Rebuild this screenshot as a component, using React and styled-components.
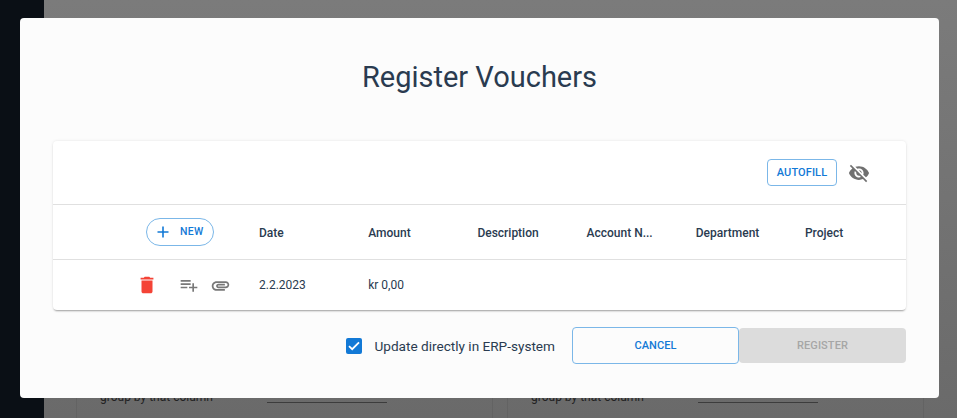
import styled, { createGlobalStyle } from "styled-components";

const GlobalStyle = createGlobalStyle`
  html, body {
    margin: 0;
    height: 100%;
    overflow: hidden;
  }
  body {
    font-family: Roboto, "Liberation Sans", sans-serif;
    color: #2a3b50;
  }
  #root {
    height: 100%;
  }
`;

const COLUMNS = ["Date", "Amount", "Description", "Account N...", "Department", "Project"];

const Page = styled.div`
  position: relative;
  display: flex;
  width: 957px;
  height: 418px;
  overflow: hidden;
`;

const Sidebar = styled.div`
  width: 44px;
  flex-shrink: 0;
  background: #0a0f15;
`;

const Backdrop = styled.div`
  flex: 1;
  display: flex;
  align-items: flex-end;
  gap: 14px;
  padding: 0 33px 0 32px;
  background: linear-gradient(#7b7b7b, #6a6a6a);
`;

const BackCard = styled.div`
  flex: 1;
  height: 60px;
  display: flex;
  align-items: flex-start;
  gap: 54px;
  padding: 30px 0 0 23px;
  box-sizing: border-box;
  border: 1px solid #636363;
  border-bottom: 0;
  font-size: 12px;
  line-height: 16px;
  white-space: nowrap;
  color: #222;
`;

const BackLine = styled.span`
  width: 120px;
  height: 13px;
  border-bottom: 1px solid #3c3c3c;
`;

const Modal = styled.div`
  position: absolute;
  left: 20px;
  top: 18px;
  width: 919px;
  height: 380px;
  box-sizing: border-box;
  padding: 0 33px;
  display: flex;
  flex-direction: column;
  background: #fcfcfc;
  border-radius: 4px;
`;

const Title = styled.h1`
  margin: 0;
  height: 123px;
  padding-top: 40px;
  box-sizing: border-box;
  text-align: center;
  font-size: 29px;
  line-height: 38px;
  font-weight: 400;
  color: #2a3b50;
`;

const Card = styled.div`
  height: 169px;
  display: flex;
  flex-direction: column;
  background: #fff;
  border-radius: 4px;
  box-shadow: 0 2px 2px -1px rgba(0, 0, 0, 0.35), 0 0 3px rgba(0, 0, 0, 0.1);
`;

const Toolbar = styled.div`
  height: 64px;
  box-sizing: border-box;
  display: flex;
  align-items: center;
  justify-content: flex-end;
  gap: 11px;
  padding: 0 36px 0 0;
  border-bottom: 1px solid #e0e0e0;
`;

const OutlineButton = styled.button`
  box-sizing: border-box;
  height: 27px;
  width: 70px;
  padding: 0;
  background: transparent;
  border: 1px solid #7bb7e8;
  border-radius: 4px;
  color: #1279d6;
  font: 500 11px/1 Roboto, sans-serif;
  letter-spacing: 0.1px;
`;

const Row = styled.div`
  display: grid;
  grid-template-columns: 206px repeat(6, 109.2px);
  align-items: center;
  height: ${(p) => p.$height}px;
  box-sizing: border-box;
  border-bottom: ${(p) => (p.$divided ? "1px solid #e0e0e0" : "0")};
`;

const HeadCell = styled.div`
  padding-top: 1px;
  font-size: 12px;
  font-weight: 500;
  color: #2a3b50;
  white-space: nowrap;
`;

const Cell = styled.div`
  font-size: 12px;
  color: #2a3b50;
  white-space: nowrap;
`;

const NewCell = styled.div`
  padding-left: 93px;
`;

const NewButton = styled.button`
  box-sizing: border-box;
  display: flex;
  align-items: center;
  width: 68px;
  height: 28px;
  padding: 0 0 0 10px;
  gap: 11px;
  background: transparent;
  border: 1px solid #7bb7e8;
  border-radius: 14px;
  color: #1279d6;
  font: 500 10.5px/1 Roboto, sans-serif;
  letter-spacing: 0.3px;
`;

const Actions = styled.div`
  display: flex;
  align-items: center;
  padding-left: 83px;
`;

const ActionIcon = styled.svg`
  display: block;
  flex-shrink: 0;
  margin-right: ${(p) => p.$gap || 0}px;
`;

const Footer = styled.div`
  height: 88px;
  display: flex;
  align-items: flex-start;
  justify-content: flex-end;
  padding-top: 17px;
  box-sizing: border-box;
`;

const CheckLabel = styled.label`
  display: flex;
  align-items: center;
  gap: 12px;
  height: 37px;
  margin-right: 17px;
  font-size: 13.6px;
  color: #2a3b50;
`;

const CheckBox = styled.span`
  width: 16px;
  height: 16px;
  display: flex;
  align-items: center;
  justify-content: center;
  background: #1279d6;
  border-radius: 2px;
`;

const FooterButton = styled.button`
  box-sizing: border-box;
  width: ${(p) => p.$width}px;
  height: ${(p) => p.$height}px;
  margin-top: ${(p) => p.$top || 0}px;
  padding: 0;
  border-radius: 4px;
  font: 500 11px/1 Roboto, sans-serif;
  letter-spacing: 0.1px;
  border: ${(p) => (p.$disabled ? "0" : "1px solid #7bb7e8")};
  background: ${(p) => (p.$disabled ? "#dcdcdc" : "transparent")};
  color: ${(p) => (p.$disabled ? "#a6a6a6" : "#1279d6")};
`;

const PlusIcon = () => (
  <svg width="12" height="12" viewBox="0 0 12 12">
    <path d="M6 .5v11M.5 6h11" stroke="#1279d6" strokeWidth="1.6" fill="none" />
  </svg>
);

const HideIcon = () => (
  <svg width="22" height="22" viewBox="0 0 24 24" fill="#707070">
    <path d="M12 7c2.76 0 5 2.24 5 5 0 .65-.13 1.26-.36 1.83l2.92 2.92c1.51-1.26 2.7-2.89 3.43-4.75-1.73-4.39-6-7.5-11-7.5-1.4 0-2.74.25-3.98.7l2.16 2.16C10.74 7.13 11.35 7 12 7zM2 4.27l2.28 2.28.46.46C3.08 8.3 1.78 10.02 1 12c1.73 4.39 6 7.5 11 7.5 1.55 0 3.03-.3 4.38-.84l.42.42L19.73 22 21 20.73 3.27 3 2 4.27zM7.53 9.8l1.55 1.55c-.05.21-.08.43-.08.65 0 1.66 1.34 3 3 3 .22 0 .44-.03.65-.08l1.55 1.55c-.67.33-1.41.53-2.2.53-2.76 0-5-2.24-5-5 0-.79.2-1.53.53-2.2zm4.31-.78l3.15 3.15.02-.16c0-1.66-1.34-3-3-3l-.17.01z" />
  </svg>
);

const App = () => {
  return (
    <>
      <GlobalStyle />
      <Page>
        <Sidebar />
        <Backdrop>
          <BackCard>
            group by that column
            <BackLine />
          </BackCard>
          <BackCard>
            group by that column
            <BackLine />
          </BackCard>
        </Backdrop>
        <Modal>
          <Title>Register Vouchers</Title>
          <Card>
            <Toolbar>
              <OutlineButton>AUTOFILL</OutlineButton>
              <HideIcon />
            </Toolbar>
            <Row $height={55} $divided>
              <NewCell>
                <NewButton>
                  <PlusIcon />
                  NEW
                </NewButton>
              </NewCell>
              {COLUMNS.map((c) => (
                <HeadCell key={c}>{c}</HeadCell>
              ))}
            </Row>
            <Row $height={50}>
              <Actions>
                <ActionIcon $gap={21} width="22" height="22" viewBox="0 0 24 24" fill="#f44336">
                  <path d="M6 19c0 1.1.9 2 2 2h8c1.1 0 2-.9 2-2V7H6v12zM19 4h-3.5l-1-1h-5l-1 1H5v2h14V4z" />
                </ActionIcon>
                <ActionIcon $gap={11} width="20" height="20" viewBox="0 0 24 24" fill="#787878">
                  <path d="M14 10H2v2h12v-2zm0-4H2v2h12V6zm4 8v-4h-2v4h-4v2h4v4h2v-4h4v-2h-4zM2 16h8v-2H2v2z" />
                </ActionIcon>
                <ActionIcon width="21" height="21" viewBox="0 0 24 24" fill="#787878">
                  <path d="M2 12.5C2 9.46 4.46 7 7.5 7H18c2.21 0 4 1.79 4 4s-1.79 4-4 4H9.5C8.12 15 7 13.88 7 12.5S8.12 10 9.5 10H17v2H9.41c-.55 0-.55 1 0 1H18c1.1 0 2-.9 2-2s-.9-2-2-2H7.5C5.57 9 4 10.57 4 12.5S5.57 16 7.5 16H17v2H7.5C4.46 18 2 15.54 2 12.5z" />
                </ActionIcon>
              </Actions>
              <Cell>2.2.2023</Cell>
              <Cell>kr 0,00</Cell>
            </Row>
          </Card>
          <Footer>
            <CheckLabel>
              <CheckBox>
                <svg width="12" height="10" viewBox="0 0 12 10">
                  <path d="M1 5.2l3.2 3L11 1.4" stroke="#fff" strokeWidth="1.8" fill="none" />
                </svg>
              </CheckBox>
              Update directly in ERP-system
            </CheckLabel>
            <FooterButton $width={167} $height={37}>CANCEL</FooterButton>
            <FooterButton $width={167} $height={35} $top={1} $disabled>REGISTER</FooterButton>
          </Footer>
        </Modal>
      </Page>
    </>
  );
};

export default App;
